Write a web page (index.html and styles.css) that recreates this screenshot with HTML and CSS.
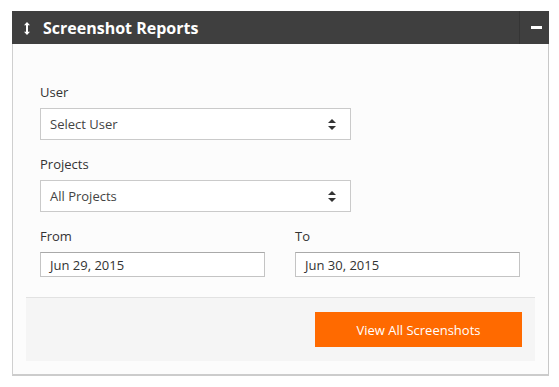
FILE: index.html
```html
<!DOCTYPE html>
<html>
<head>
<meta charset="utf-8">
<link rel="stylesheet" href="styles.css">
</head>
<body>
<div class="page">
  <div class="panel">
    <div class="panel-head">
      <svg class="head-icon" width="6" height="13" viewBox="0 0 6 13"><path d="M3 0 L6 3.2 H4 V9.8 H6 L3 13 L0 9.8 H2 V3.2 H0 Z" fill="#fff"/></svg>
      <span class="head-title">Screenshot Reports</span>
      <span class="head-toggle"><span class="minus"></span></span>
    </div>
    <div class="panel-body">
      <div class="form">
        <div class="group">
          <div class="label">User</div>
          <div class="select">Select User<span class="arrows"><svg width="8" height="11" viewBox="0 0 8 11"><path d="M4 0 L8 4 H0 Z M0 7 H8 L4 11 Z" fill="#333"/></svg></span></div>
        </div>
        <div class="group">
          <div class="label">Projects</div>
          <div class="select">All Projects<span class="arrows"><svg width="8" height="11" viewBox="0 0 8 11"><path d="M4 0 L8 4 H0 Z M0 7 H8 L4 11 Z" fill="#333"/></svg></span></div>
        </div>
        <div class="dates">
          <div class="date-col">
            <div class="label">From</div>
            <div class="date-input">Jun 29, 2015</div>
          </div>
          <div class="date-col">
            <div class="label">To</div>
            <div class="date-input">Jun 30, 2015</div>
          </div>
        </div>
      </div>
      <div class="footer">
        <button class="btn">View All Screenshots</button>
      </div>
    </div>
  </div>
</div>
</body>
</html>
```
FILE: styles.css
```css
html, body {
  margin: 0;
  padding: 0;
  background: #ffffff;
  font-family: "Open Sans", "Liberation Sans", sans-serif;
}
.page {
  padding: 11px 10px 0 12px;
}
.panel {
  width: 537px;
}
.panel-head {
  height: 33px;
  background: #3f3f3f;
  display: flex;
  align-items: center;
  color: #fff;
}
.head-icon {
  margin-left: 12px;
  margin-right: 13px;
  margin-top: 1px;
}
.head-title {
  font-weight: 700;
  font-size: 16px;
  flex: 1;
  line-height: 33px;
  padding-top: 1px;
}
.head-toggle {
  width: 30px;
  height: 33px;
  border-left: 1px solid #353535;
  display: flex;
  align-items: center;
  justify-content: center;
  box-sizing: border-box;
}
.minus {
  width: 11px;
  height: 3px;
  background: #fff;
  margin-left: 3px;
  margin-top: -1px;
}
.panel-body {
  background: #fcfcfc;
  border-left: 1px solid #cfcfcf;
  border-right: 1px solid #c8c8c8;
  border-bottom: 2px solid #cccccc;
  padding: 0 13px 13px 13px;
}
.form {
  padding: 39px 14px 20px 14px;
}
.group {
  margin-bottom: 15px;
}
.label {
  font-size: 13px;
  line-height: 18px;
  color: #333;
  margin-bottom: 7px;
}
.select {
  width: 311px;
  height: 32px;
  box-sizing: border-box;
  border: 1px solid #cacaca;
  background: #fff;
  font-size: 13px;
  line-height: 18px;
  color: #444;
  padding: 6px 9px;
  display: flex;
  align-items: center;
  justify-content: space-between;
}
.arrows {
  display: flex;
  margin-right: 5px;
}
.dates {
  display: flex;
  gap: 30px;
}
.date-col {
  width: 225px;
}
.date-input {
  height: 25px;
  box-sizing: border-box;
  border: 1px solid #c4c4c4;
  border-top-color: #a9a9a9;
  background: #fff;
  font-size: 13px;
  line-height: 18px;
  color: #333;
  padding: 3px 9px;
}
.footer {
  background: #f5f5f5;
  border-top: 1px solid #e2e2e2;
  padding: 14px 13px 14px 0;
  display: flex;
  justify-content: flex-end;
}
.btn {
  width: 207px;
  height: 35px;
  background: #ff6a00;
  border: none;
  color: #fff;
  font-family: "Open Sans", "Liberation Sans", sans-serif;
  font-size: 13px;
  padding: 0;
}
```
